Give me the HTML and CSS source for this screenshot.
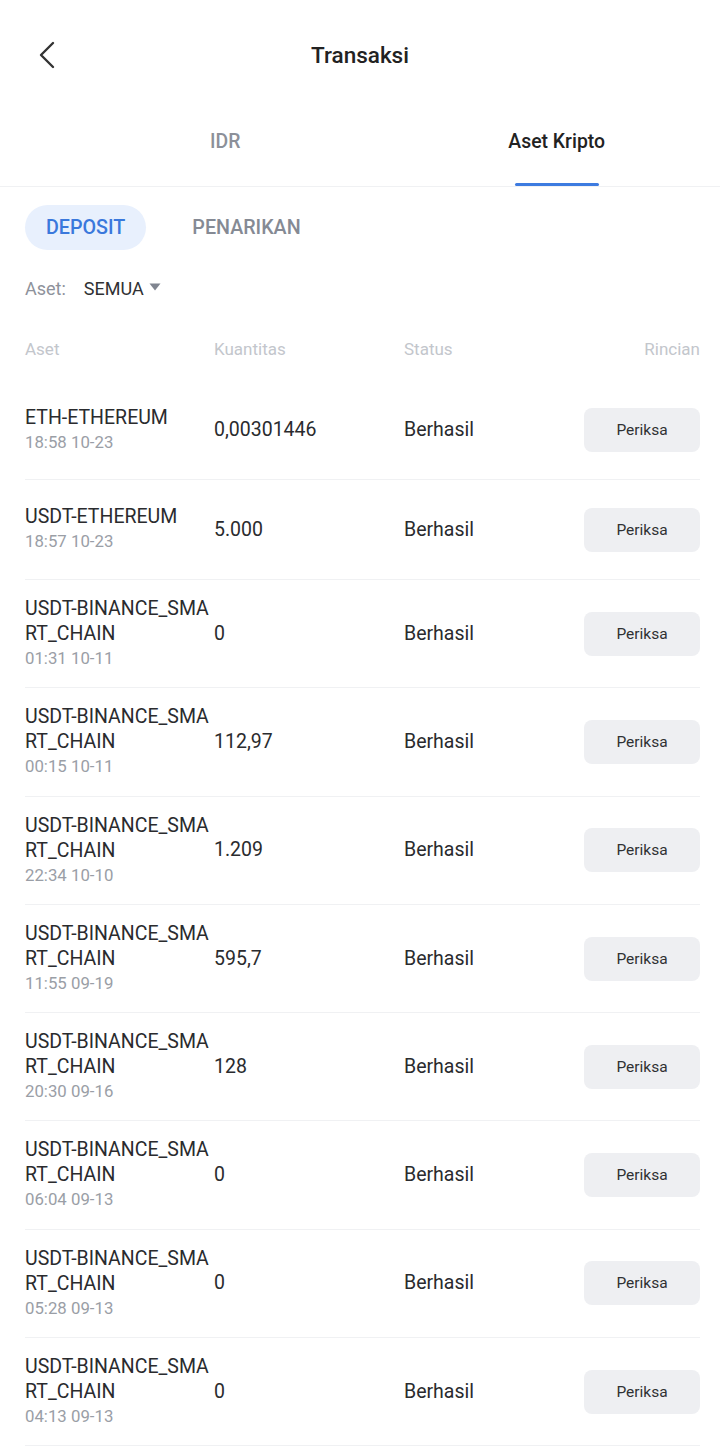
FILE: index.html
```html
<!DOCTYPE html>
<html lang="id">
<head>
<meta charset="utf-8">
<title>Transaksi</title>
<link rel="stylesheet" href="styles.css">
</head>
<body>
<div class="page">
  <header class="topbar">
    <svg class="back" width="24" height="30" viewBox="0 0 24 30"><path d="M17 3 L5 15 L17 27" fill="none" stroke="#333" stroke-width="2.4" stroke-linecap="round" stroke-linejoin="round"/></svg>
    <h1 class="title">Transaksi</h1>
  </header>

  <nav class="tabs">
    <div class="tab">IDR</div>
    <div class="tab active">Aset Kripto</div>
  </nav>

  <div class="segments">
    <div class="seg active">DEPOSIT</div>
    <div class="seg">PENARIKAN</div>
  </div>

  <div class="filter">
    <span class="filter-label">Aset:</span>
    <span class="filter-value">SEMUA</span>
    <svg class="caret" width="12" height="8" viewBox="0 0 12 8"><path d="M0.5 0.5 H11.5 L6 7.5 Z" fill="#808590"/></svg>
  </div>

  <div class="thead">
    <span class="c1">Aset</span>
    <span class="c2">Kuantitas</span>
    <span class="c3">Status</span>
    <span class="c4">Rincian</span>
  </div>

  <div class="list">
    <div class="row">
      <div class="c1"><div class="name">ETH-ETHEREUM</div><div class="time">18:58 10-23</div></div>
      <div class="c2 val">0,00301446</div>
      <div class="c3 status">Berhasil</div>
      <div class="c4"><span class="btn">Periksa</span></div>
    </div>
    <div class="row">
      <div class="c1"><div class="name">USDT-ETHEREUM</div><div class="time">18:57 10-23</div></div>
      <div class="c2 val">5.000</div>
      <div class="c3 status">Berhasil</div>
      <div class="c4"><span class="btn">Periksa</span></div>
    </div>
    <div class="row">
      <div class="c1"><div class="name">USDT-BINANCE_SMART_CHAIN</div><div class="time">01:31 10-11</div></div>
      <div class="c2 val">0</div>
      <div class="c3 status">Berhasil</div>
      <div class="c4"><span class="btn">Periksa</span></div>
    </div>
    <div class="row">
      <div class="c1"><div class="name">USDT-BINANCE_SMART_CHAIN</div><div class="time">00:15 10-11</div></div>
      <div class="c2 val">112,97</div>
      <div class="c3 status">Berhasil</div>
      <div class="c4"><span class="btn">Periksa</span></div>
    </div>
    <div class="row">
      <div class="c1"><div class="name">USDT-BINANCE_SMART_CHAIN</div><div class="time">22:34 10-10</div></div>
      <div class="c2 val">1.209</div>
      <div class="c3 status">Berhasil</div>
      <div class="c4"><span class="btn">Periksa</span></div>
    </div>
    <div class="row">
      <div class="c1"><div class="name">USDT-BINANCE_SMART_CHAIN</div><div class="time">11:55 09-19</div></div>
      <div class="c2 val">595,7</div>
      <div class="c3 status">Berhasil</div>
      <div class="c4"><span class="btn">Periksa</span></div>
    </div>
    <div class="row">
      <div class="c1"><div class="name">USDT-BINANCE_SMART_CHAIN</div><div class="time">20:30 09-16</div></div>
      <div class="c2 val">128</div>
      <div class="c3 status">Berhasil</div>
      <div class="c4"><span class="btn">Periksa</span></div>
    </div>
    <div class="row">
      <div class="c1"><div class="name">USDT-BINANCE_SMART_CHAIN</div><div class="time">06:04 09-13</div></div>
      <div class="c2 val">0</div>
      <div class="c3 status">Berhasil</div>
      <div class="c4"><span class="btn">Periksa</span></div>
    </div>
    <div class="row">
      <div class="c1"><div class="name">USDT-BINANCE_SMART_CHAIN</div><div class="time">05:28 09-13</div></div>
      <div class="c2 val">0</div>
      <div class="c3 status">Berhasil</div>
      <div class="c4"><span class="btn">Periksa</span></div>
    </div>
    <div class="row">
      <div class="c1"><div class="name">USDT-BINANCE_SMART_CHAIN</div><div class="time">04:13 09-13</div></div>
      <div class="c2 val">0</div>
      <div class="c3 status">Berhasil</div>
      <div class="c4"><span class="btn">Periksa</span></div>
    </div>
  </div>
</div>
</body>
</html>
```

FILE: styles.css
```css
* { box-sizing: border-box; }
html, body { margin: 0; padding: 0; background: #fff; }
body {
  font-family: Roboto, "Noto Sans", "Liberation Sans", sans-serif;
  color: #303133;
  width: 720px;
  overflow: hidden;
}
.page { width: 720px; }

.topbar {
  height: 110px;
  display: flex;
  align-items: center;
  justify-content: center;
  position: relative;
}
.back { position: absolute; left: 36px; top: 40px; }
.title {
  margin: 0;
  font-size: 22.5px;
  font-weight: 500;
  color: #222;
  line-height: 26px;
}

.tabs {
  display: flex;
  height: 77px;
  border-bottom: 1px solid #f0f1f3;
  padding-left: 210px;
  gap: 268px;
}
.tab {
  position: relative;
  padding-top: 19px;
  font-size: 19.4px;
  font-weight: 500;
  line-height: 26px;
  color: #8c9099;
}
.tab.active { color: #222; }
.tab.active::after {
  content: "";
  position: absolute;
  left: 50%;
  bottom: 0;
  width: 84px;
  margin-left: -42px;
  height: 3px;
  border-radius: 2px;
  background: #3d7be0;
}

.segments {
  display: flex;
  align-items: center;
  gap: 25px;
  padding: 18px 25px 0;
}
.seg {
  height: 45px;
  line-height: 45px;
  padding: 0 21px;
  border-radius: 23px;
  font-size: 19.7px;
  font-weight: 500;
  color: #858a94;
}
.seg.active {
  background: #e8f0fd;
  color: #3a78dc;
}

.filter {
  display: flex;
  align-items: center;
  padding: 0 25px;
  margin-top: 26px;
  height: 24px;
  font-size: 18px;
}
.filter-label { color: #8e929b; margin-right: 18px; }
.filter-value { color: #303133; margin-right: 5px; }
.caret { margin-top: -3px; }

.thead {
  display: flex;
  align-items: center;
  padding: 0 20px 0 25px;
  margin-top: 37px;
  height: 24px;
  font-size: 17px;
  color: #c3c6cc;
}

.c1 { width: 189px; flex: none; }
.c2 { width: 190px; flex: none; }
.c3 { width: 150px; flex: none; }
.c4 { flex: 1; text-align: right; }

.list { padding: 0 20px 0 25px; margin-top: 20px; }
.row {
  display: flex;
  align-items: center;
  min-height: 100px;
  padding: 16px 0;
  border-bottom: 1px solid #f0f1f3;
}
.list .row:first-child { min-height: 99px; }
.name {
  font-size: 19.5px;
  line-height: 25px;
  color: #2a2b2e;
  word-break: break-all;
}
.time {
  font-size: 16.8px;
  line-height: 25.3px;
  color: #9a9ea6;
}
.val, .status {
  font-size: 19.5px;
  line-height: 24px;
  color: #2a2b2e;
}
.btn {
  display: inline-block;
  width: 116px;
  height: 44px;
  line-height: 44px;
  text-align: center;
  border-radius: 8px;
  background: #eeeff2;
  font-size: 15.5px;
  color: #303133;
}
```
